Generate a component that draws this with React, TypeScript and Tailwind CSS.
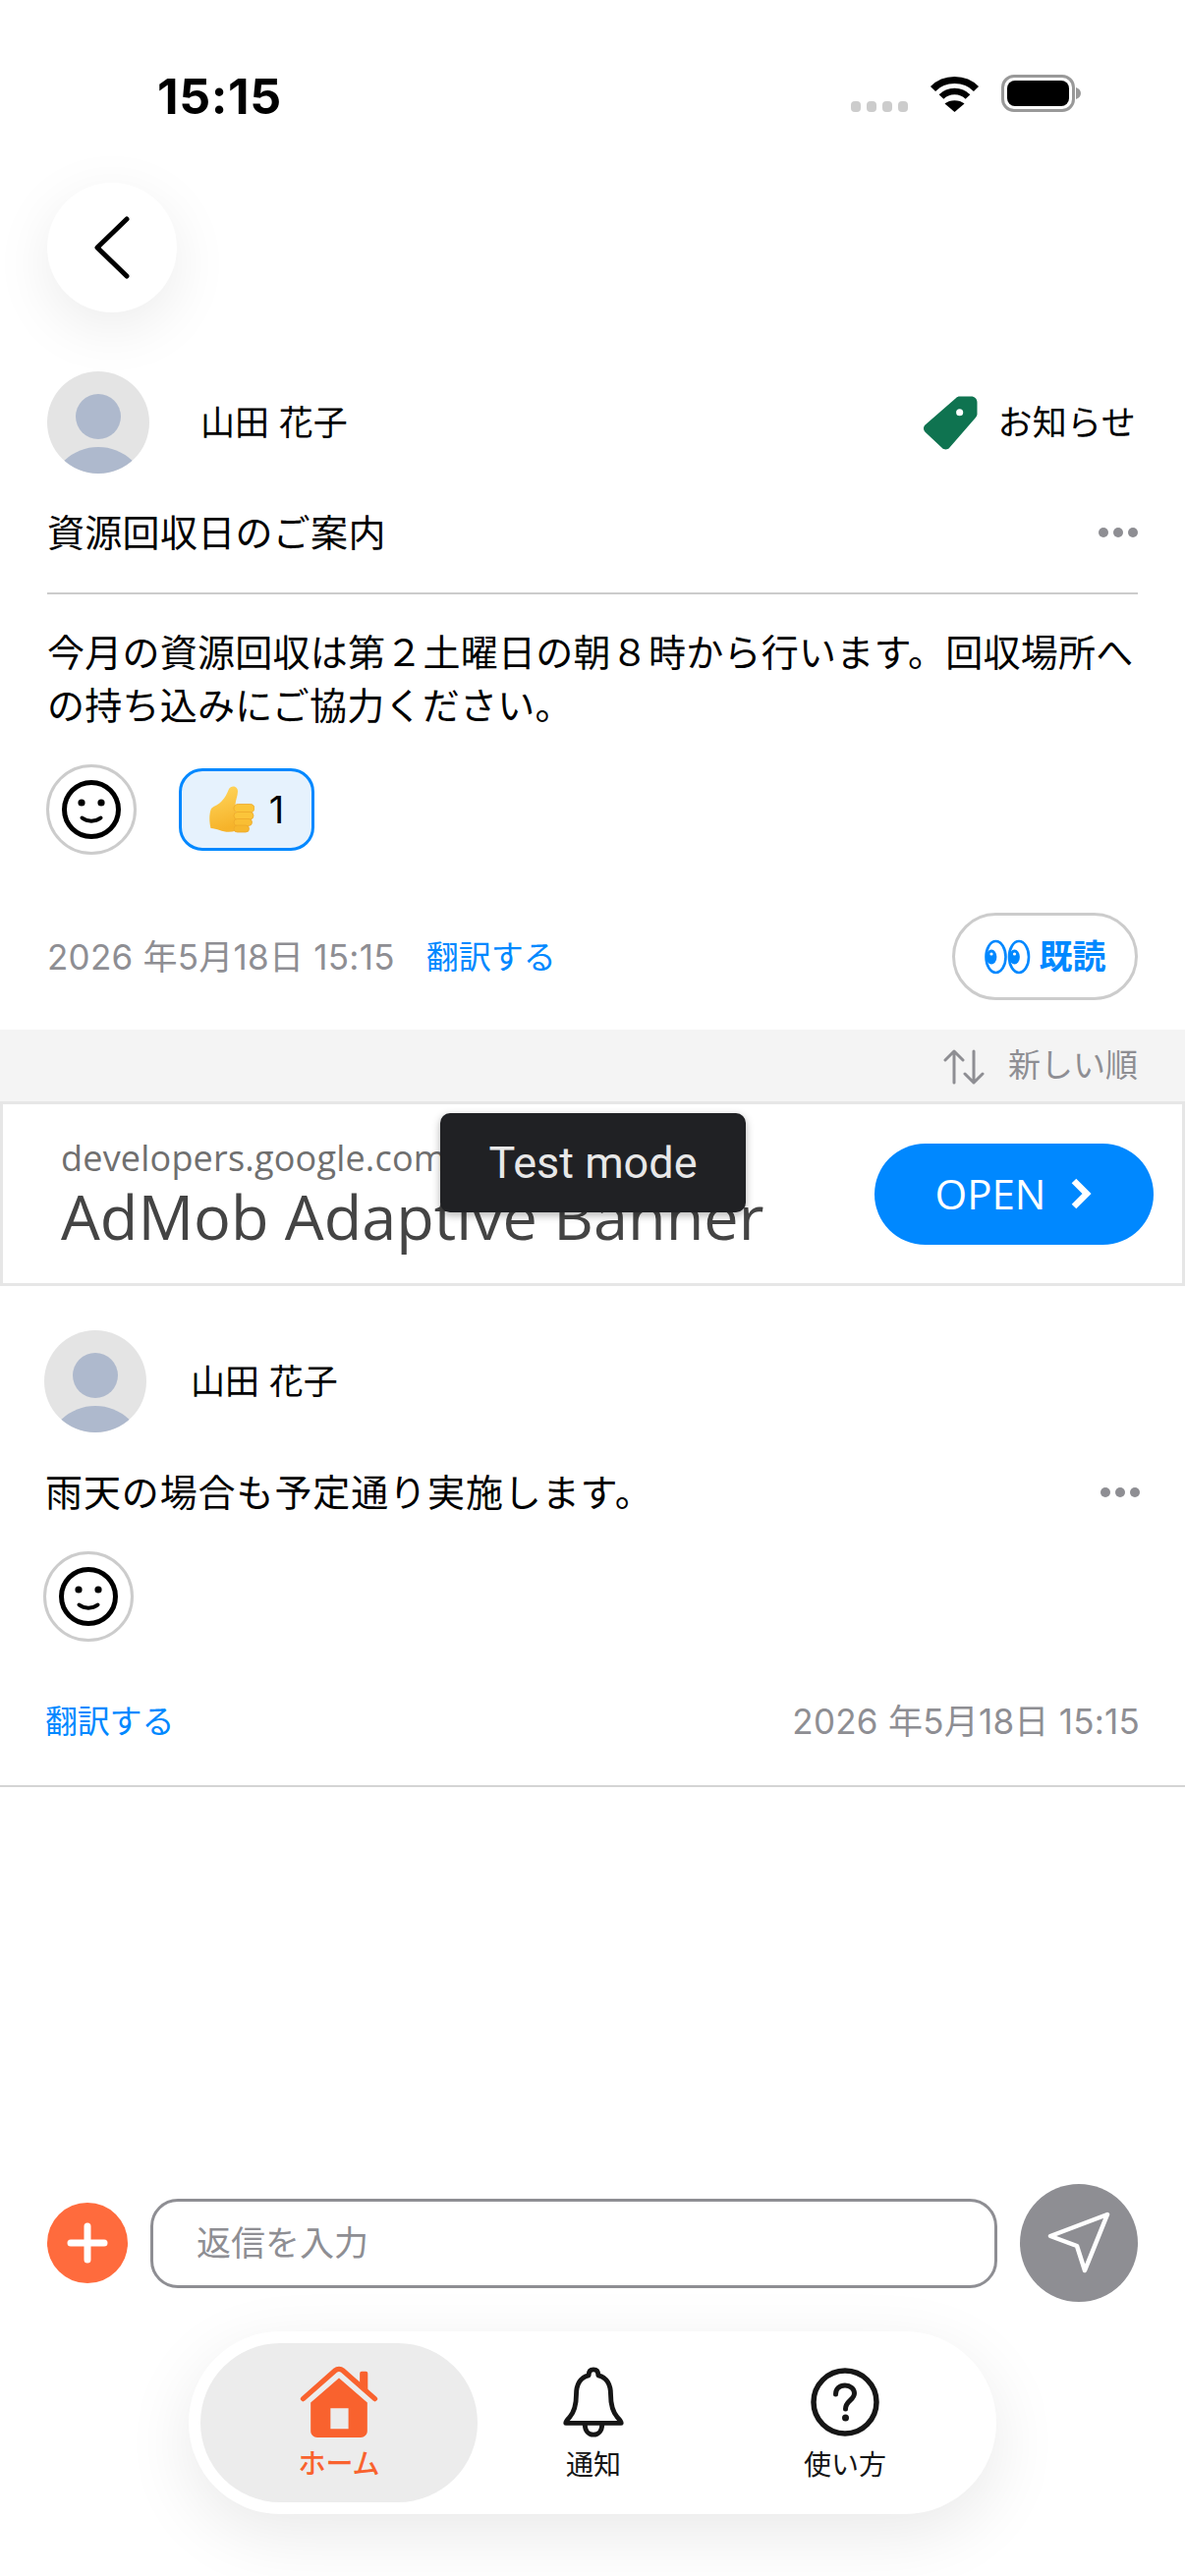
import React from "react";

const Avatar = () => (
  <svg width="104" height="104" viewBox="0 0 104 104" className="shrink-0">
    <defs>
      <clipPath id="av"><circle cx="52" cy="52" r="52" /></clipPath>
    </defs>
    <circle cx="52" cy="52" r="52" fill="#e4e4e4" />
    <g clipPath="url(#av)">
      <circle cx="52" cy="46" r="23" fill="#aeb9cd" />
      <ellipse cx="52" cy="122" rx="48" ry="45" fill="#aeb9cd" />
    </g>
  </svg>
);

const Dots = () => (
  <div className="flex gap-[5px]">
    <span className="w-[10px] h-[10px] rounded-full bg-[#8e8e93]" />
    <span className="w-[10px] h-[10px] rounded-full bg-[#8e8e93]" />
    <span className="w-[10px] h-[10px] rounded-full bg-[#8e8e93]" />
  </div>
);

const Smile = () => (
  <div className="-ml-[1px] w-[92px] h-[92px] rounded-full border-[3px] border-[#cccccc] flex items-center justify-center shrink-0">
    <svg width="62" height="62" viewBox="0 0 62 62" fill="none">
      <circle cx="31" cy="31" r="27.5" stroke="#000" strokeWidth="5" />
      <circle cx="21" cy="24" r="3.6" fill="#000" />
      <circle cx="41" cy="24" r="3.6" fill="#000" />
      <path d="M21.500 39.500c5.500 4.200 13.500 4.200 19 0" stroke="#000" strokeWidth="4" strokeLinecap="round" />
    </svg>
  </div>
);

const Thumb = () => (
  <svg width="46" height="48" viewBox="0 0 46 48">
    <defs>
      <linearGradient id="th" x1="0" y1="0" x2="0.2" y2="1">
        <stop offset="0" stopColor="#ffd75e" />
        <stop offset="1" stopColor="#f6b32a" />
      </linearGradient>
    </defs>
    <path
      d="M20 3c2-4 9-3.500 9 2.500 0 5-2.500 9-2.500 14l1 26c-6 2-12 1.500-17-.5-3-1-6-2-9-2-1.500-6-2-14 .5-20 3-3 8-4 11-8 3-3 5-7 7-12z"
      fill="url(#th)"
    />
    <rect x="25" y="18.500" width="21" height="8.500" rx="4.200" fill="#fbc53a" stroke="#eda82b" strokeWidth="0.8" />
    <rect x="25" y="26.500" width="20" height="7.500" rx="3.700" fill="#fbc53a" stroke="#eda82b" strokeWidth="0.8" />
    <rect x="25" y="33.500" width="18.500" height="7" rx="3.500" fill="#f9be34" stroke="#eda82b" strokeWidth="0.8" />
    <rect x="25" y="40" width="15.500" height="7" rx="3.500" fill="#f6b72e" stroke="#eda82b" strokeWidth="0.8" />
  </svg>
);

const Eyes = () => (
  <svg width="47" height="36" viewBox="0 0 47 36" fill="none">
    <ellipse cx="11.500" cy="18" rx="10" ry="16" stroke="#0088ff" strokeWidth="2.600" fill="#fff" />
    <ellipse cx="35" cy="18" rx="10" ry="16" stroke="#0088ff" strokeWidth="2.600" fill="#fff" />
    <ellipse cx="7" cy="18" rx="5.400" ry="7.400" fill="#0088ff" />
    <ellipse cx="30.500" cy="18" rx="5.400" ry="7.400" fill="#0088ff" />
    <circle cx="7" cy="15" r="1.600" fill="#fff" />
    <circle cx="30.500" cy="15" r="1.600" fill="#fff" />
  </svg>
);

export default function App() {
  return (
    <div className="relative w-[1206px] h-[2622px] bg-white flex flex-col overflow-hidden text-black font-['Inter','Noto_Sans_CJK_JP',sans-serif]">
      {/* status bar */}
      <div className="mt-[70px] h-[56px] flex items-center shrink-0">
        <span className="ml-[160px] text-[50px] font-bold leading-none tracking-[0.6px]">15:15</span>
        <div className="ml-auto flex items-end mr-[106px]">
          <div className="flex gap-[6px] mb-[6px]">
            <span className="w-[10px] h-[11px] rounded-[4px] bg-[#cccccc]" />
            <span className="w-[10px] h-[11px] rounded-[4px] bg-[#cccccc]" />
            <span className="w-[10px] h-[11px] rounded-[4px] bg-[#cccccc]" />
            <span className="w-[10px] h-[11px] rounded-[4px] bg-[#cccccc]" />
          </div>
          <svg width="51" height="38" viewBox="0 0 51 38" className="ml-[22px] mb-[6px]" fill="none">
            <path d="M3.500 14.500C15 2.500 36 2.500 47.500 14.500" stroke="#000" strokeWidth="7" />
            <path d="M12 22.500C19 15 32 15 39 22.500" stroke="#000" strokeWidth="6.500" />
            <path d="M25.500 38 15.500 29.500C20.500 25 30.500 25 35.500 29.500Z" fill="#000" />
          </svg>
          <div className="ml-[22px] mb-[6px] flex items-center">
            <div className="w-[75px] h-[38px] rounded-[13px] border-[3px] border-[#999999] p-[3px]">
              <div className="w-full h-full rounded-[8px] bg-black" />
            </div>
            <svg width="5" height="12" viewBox="0 0 5 12" className="ml-[1px]">
              <path d="M0 0c3 1 5 3 5 6s-2 5-5 6z" fill="#999999" />
            </svg>
          </div>
        </div>
      </div>

      {/* back */}
      <div className="mt-[60px] ml-[48px] w-[132px] h-[132px] rounded-full bg-white shadow-[0_16px_60px_rgba(0,0,0,0.08)] flex items-center justify-center shrink-0">
        <svg width="40" height="66" viewBox="0 0 40 66" fill="none">
          <path d="M35 4 5 33l30 29" stroke="#000" strokeWidth="5" strokeLinecap="round" strokeLinejoin="round" />
        </svg>
      </div>

      {/* post 1 */}
      <div className="relative mt-[60px] px-[48px] shrink-0">
        <div className="flex items-center h-[104px]">
          <Avatar />
          <span className="ml-[52px] text-[35px] leading-none">山田 花子</span>
          <div className="ml-auto flex items-center">
            <svg width="55" height="55" viewBox="0 0 54 54">
              <path
                fillRule="evenodd"
                d="M36 .5h11.500c3.500 0 6 2.500 6 6V18c0 1.500-.5 2.500-1.500 3.500L26 51.500c-2 2.500-5.500 2.500-7.500.5L1.500 36c-2-2-2-5 0-7L32.500 2C33.500 1 34.500.5 36 .5zM36 13a3.500 3.500 0 1 0 0 7 3.500 3.500 0 0 0 0-7z"
                fill="#0f7350"
              />
            </svg>
            <span className="ml-[20px] mr-[2px] text-[35px] leading-none tracking-[0.3px]">お知らせ</span>
          </div>
        </div>

        <div className="mt-[30px] h-[60px] flex items-center justify-between">
          <span className="text-[38px] leading-none tracking-[0.3px]">資源回収日のご案内</span>
          <Dots />
        </div>
        <div className="mt-[31px] h-[2px] bg-[#cccccc]" />
        <p className="mt-[32px] text-[38px] leading-[54px] tracking-[0.25px]">
          今月の資源回収は第２土曜日の朝８時から行います。回収場所への持ち込みにご協力ください。
        </p>
        <div className="mt-[33px] flex items-center">
          <Smile />
          <div className="ml-[43px] w-[138px] h-[84px] rounded-[24px] border-[3px] border-[#0088ff] bg-[#e6f2fd] flex items-center justify-center">
            <Thumb />
            <span className="ml-[15px] text-[38px] leading-none">1</span>
          </div>
        </div>
        <div className="mt-[59px] h-[89px] flex items-center">
          <span className="mt-[2px] text-[35px] leading-none text-[#8e8e93] tracking-[0.25px]">2026 年5月18日 15:15</span>
          <span className="mt-[2px] ml-[32px] text-[33px] leading-none text-[#0088ff]">翻訳する</span>
          <div className="ml-auto w-[189px] h-[89px] rounded-full border-[3px] border-[#cccccc] flex items-center justify-center">
            <Eyes />
            <span className="ml-[9px] text-[34px] leading-none font-bold text-[#0088ff]">既読</span>
          </div>
        </div>
      </div>

      {/* sort band */}
      <div className="mt-[30px] h-[73px] bg-[#f4f4f4] flex items-center justify-end pr-[48px] shrink-0">
        <svg width="42" height="36" viewBox="0 0 42 36" fill="none" className="mt-[2px]">
          <path d="M11 34V2M2 11l9-9 9 9" stroke="#8e8e93" strokeWidth="3" strokeLinecap="round" strokeLinejoin="round" />
          <path d="M31 2v32M22 25l9 9 9-9" stroke="#8e8e93" strokeWidth="3" strokeLinecap="round" strokeLinejoin="round" />
        </svg>
        <span className="ml-[24px] text-[33px] leading-none text-[#8e8e93]">新しい順</span>
      </div>

      {/* ad */}
      <div className="relative h-[188px] -mb-[1px] border-[3px] border-[#e6e6e6] bg-white flex items-center shrink-0 font-['Open_Sans','Noto_Sans',sans-serif]">
        <div className="ml-[59px] flex flex-col">
          <span className="text-[36px] leading-[46px] text-[#6f6f6f] tracking-[0.2px]">developers.google.com</span>
          <span className="text-[63px] leading-[72px] text-[#444444] whitespace-nowrap">AdMob Adaptive Banner</span>
        </div>
        <div className="ml-auto mr-[29px] w-[284px] h-[103px] rounded-full bg-[#0088ff] flex items-center justify-center text-white">
          <span className="text-[42px] leading-none">OPEN</span>
          <svg width="24" height="34" viewBox="0 0 24 34" fill="none" className="ml-[24px]">
            <path d="M5 4l13 13L5 30" stroke="#fff" strokeWidth="6.500" strokeLinejoin="miter" />
          </svg>
        </div>
        <div className="absolute left-[445px] top-[9px] w-[311px] h-[101px] rounded-[10px] bg-[#202124] shadow-[0_3px_8px_rgba(0,0,0,0.3)] flex items-center justify-center text-[45px] leading-none text-[#e8e8e8] font-['Roboto',sans-serif]">
          Test mode
        </div>
      </div>

      {/* post 2 */}
      <div className="pt-[46px] pl-[45px] pr-[46px] shrink-0">
        <div className="flex items-center h-[104px]">
          <Avatar />
          <span className="ml-[45px] text-[35px] leading-none">山田 花子</span>
        </div>
        <div className="mt-[31px] h-[60px] flex items-center justify-between">
          <span className="ml-[1px] text-[38px] leading-none tracking-[0.9px]">雨天の場合も予定通り実施します。</span>
          <Dots />
        </div>
        <div className="mt-[30px]">
          <Smile />
        </div>
        <div className="mt-[57px] h-[48px] flex items-center justify-between">
          <span className="ml-[1px] text-[33px] leading-none text-[#0088ff] -tracking-[0.2px]">翻訳する</span>
          <span className="text-[35px] leading-none text-[#8e8e93] tracking-[0.25px]">2026 年5月18日 15:15</span>
        </div>
      </div>
      <div className="mt-[41px] h-[2px] bg-[#d4d4d4] shrink-0" />

      <div className="flex-1" />

      {/* input */}
      <div className="flex items-center pl-[48px] pr-[48px] shrink-0">
        <div className="w-[82px] h-[82px] rounded-full bg-[#ff6b3d] flex items-center justify-center shrink-0">
          <svg width="42" height="42" viewBox="0 0 42 42" fill="none">
            <path d="M21 4v34M4 21h34" stroke="#fff" strokeWidth="7" strokeLinecap="round" />
          </svg>
        </div>
        <div className="ml-[23px] w-[862px] h-[91px] rounded-[28px] border-[3px] border-[#8e8e93] bg-white flex items-center pl-[44px]">
          <span className="text-[35px] leading-none text-[#8e8e93]">返信を入力</span>
        </div>
        <div className="ml-auto w-[120px] h-[120px] rounded-full bg-[#8e8e93] flex items-center justify-center shrink-0">
          <svg width="68" height="68" viewBox="0 0 68 68" fill="none">
            <path d="M63 5 5 27l27 10 8 25L63 5Z" stroke="#fff" strokeWidth="4.500" strokeLinejoin="round" />
          </svg>
        </div>
      </div>

      {/* tab bar */}
      <div className="mt-[30px] mb-[63px] mx-auto w-[822px] h-[186px] rounded-[93px] bg-white shadow-[0_20px_70px_rgba(0,0,0,0.09)] p-[12px] flex items-stretch shrink-0">
        <div className="w-[282px] rounded-[81px] bg-[#ececec] flex flex-col items-center pt-[23px]">
          <svg width="82" height="73" viewBox="0 0 84 76">
            <path d="M72.500 8a2 2 0 0 0-2-2h-4.500a2 2 0 0 0-2 2v10l8.500 7.500z" fill="#f9622e" />
            <path d="M4 35 38 5c2.300-2 5.700-2 8 0l34 30" fill="none" stroke="#f9622e" strokeWidth="5.500" strokeLinecap="round" strokeLinejoin="round" />
            <path
              fillRule="evenodd"
              d="M42 13 72 39v30c0 4-3 7-7 7H19c-4 0-7-3-7-7V39L42 13zM33 45v22h19V45H33z"
              fill="#f9622e"
            />
          </svg>
          <span className="mt-[13px] text-[28px] leading-none font-medium text-[#f9622e]">ホーム</span>
        </div>
        <div className="w-[236px] flex flex-col items-center pt-[24px]">
          <svg width="68" height="72" viewBox="0 0 68 74" fill="none">
            <path
              d="M34 3c3 0 5 2 5 6 9 2 13 10 13 20 0 9 2 18 7 24 2 2 4 4 4 6H5c0-2 2-4 4-6 5-6 7-15 7-24 0-10 4-18 13-20 0-4 2-6 5-6z"
              stroke="#161616"
              strokeWidth="5"
              strokeLinejoin="round"
            />
            <path d="M25 60c0 7 4 11 9 11s9-4 9-11" stroke="#161616" strokeWidth="5" />
          </svg>
          <span className="mt-[14px] text-[28px] leading-none text-[#161616]">通知</span>
        </div>
        <div className="w-[276px] flex flex-col items-center pt-[24px]">
          <svg width="70" height="72" viewBox="0 0 70 72" fill="none">
            <circle cx="35" cy="36" r="32" stroke="#161616" strokeWidth="5.500" />
            <path d="M25.500 28c0-5.500 4-9 9.500-9s9.500 3.500 9.500 8c0 7-9 7.500-9 16" stroke="#161616" strokeWidth="5" strokeLinecap="round" />
            <circle cx="35.500" cy="52" r="3.500" fill="#161616" />
          </svg>
          <span className="mt-[14px] text-[28px] leading-none text-[#161616]">使い方</span>
        </div>
      </div>
    </div>
  );
}
